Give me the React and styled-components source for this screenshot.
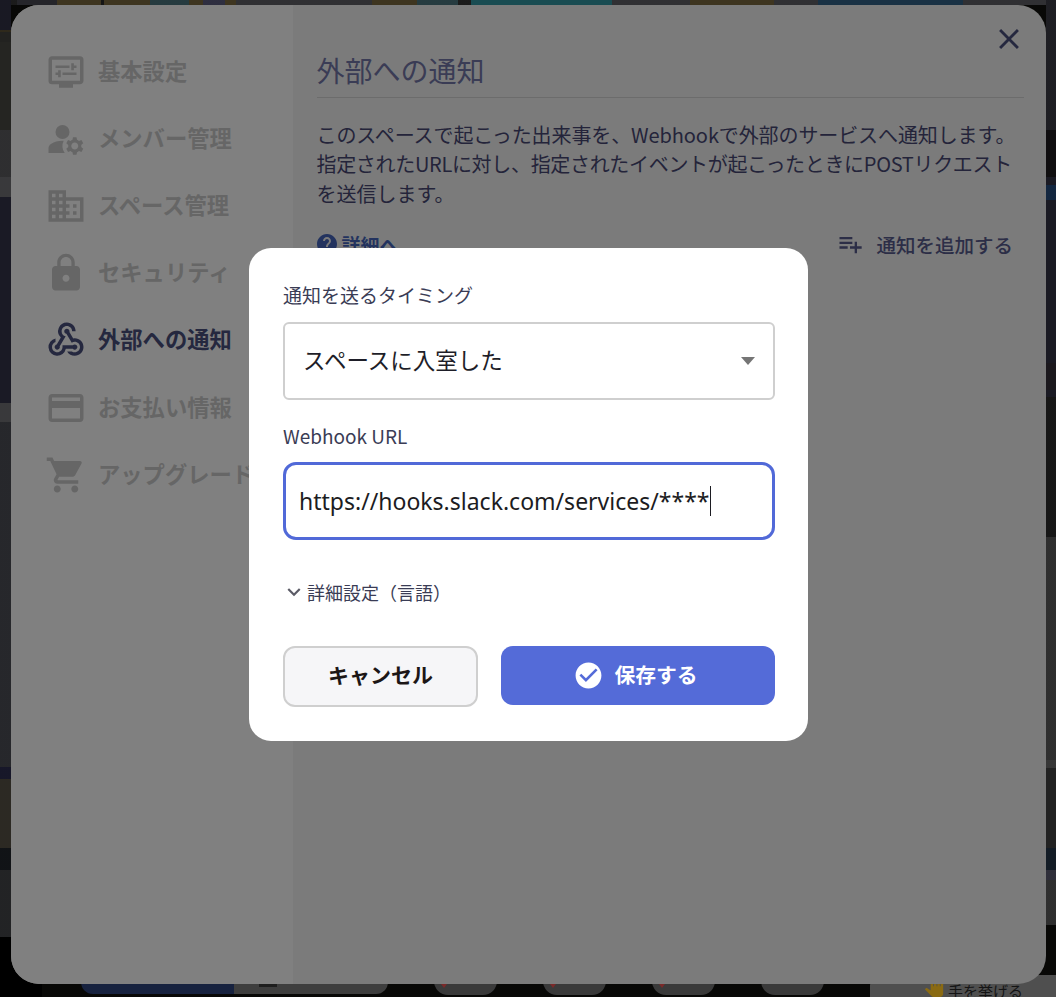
import React from "react";
import styled, { createGlobalStyle } from "styled-components";
import {
  MdDisplaySettings,
  MdManageAccounts,
  MdDomain,
  MdLock,
  MdWebhook,
  MdCreditCard,
  MdShoppingCart,
  MdClose,
  MdPlaylistAdd,
  MdHelp,
  MdCheckCircle,
  MdExpandMore,
  MdPanTool,
} from "react-icons/md";

const Global = createGlobalStyle`
  html, body { margin: 0; padding: 0; height: 100%; background: #0a0a08; }
  body { font-family: "Noto Sans CJK JP", "Noto Sans", sans-serif; overflow: hidden; }
  * { box-sizing: border-box; }
`;

const leftEdge = `linear-gradient(to bottom,
  #1f1f2c 0 30px, #3a3322 30px 32px, #2a2a28 32px 42px, #2e2e2a 42px 130px,
  #3a3a3c 130px 177px, #47474a 177px 197px, #20202e 197px 403px, #47474a 403px 422px,
  #303136 422px 767px, #1d1d33 767px 779px, #37332c 779px 848px, #15181c 848px 870px,
  #2b2c2e 870px 937px, #000 937px)`;

const rightEdge = `linear-gradient(to bottom,
  #26262c 0 130px, #141214 130px 177px, #20202c 177px 185px, #173050 185px 200px,
  #20202c 200px 363px, #221e24 363px 390px, #20202c 390px 397px, #1c1c1c 397px 537px,
  #3a3a3a 537px 760px, #444 760px 768px, #2a2a2a 768px 848px, #18232f 848px 870px,
  #3a3a48 870px 880px, #3a3a3a 880px 925px, #0a0a08 925px)`;

const topEdge = `linear-gradient(to right,
  #222 0 17px, #2e2e34 17px 57px, #4d4228 57px 101px, #1a1a1a 101px 104px, #4d4228 104px 150px,
  #2f4a50 150px 189px, #4d4228 189px 203px, #3a3a50 203px 225px, #4d4228 225px 236px,
  #3c3c40 236px 372px, #4d4228 372px 417px, #2f4a50 417px 458px, #222 458px 471px,
  #1f5f66 471px 612px, #3c3c40 612px 690px, #4d4228 690px 774px, #3c3c40 774px 818px,
  #1f3d55 818px 963px, #3c3c40 963px)`;

const Stage = styled.div`
  position: relative;
  width: 1056px;
  height: 997px;
  overflow: hidden;
  padding: 5px 10px 13px 11px;
  display: flex;
  background:
    linear-gradient(rgba(0, 0, 0, 0.2), rgba(0, 0, 0, 0.2)),
    ${leftEdge} left top / 11px 100% no-repeat,
    ${rightEdge} right top / 10px 100% no-repeat,
    ${topEdge} left top / 100% 5px no-repeat,
    linear-gradient(to right, #000 0 42px, #0a0a08 42px) left bottom / 100% 60px no-repeat,
    #0a0a08;
`;

const Dock = styled.footer`
  position: absolute;
  left: 0;
  right: 0;
  bottom: 0;
  height: 22px;
  padding-left: 81px;
  display: flex;
  align-items: flex-start;
`;

const MainTab = styled.div`
  width: 153px;
  height: 19px;
  background: ${(p) => p.$c};
  border-radius: ${(p) => p.$r};
`;

const GrayTab = styled(MainTab)`
  width: 154px;
  margin-right: 46px;
  padding: 9px 0 0 25px;
`;

const TabMark = styled.div`
  width: 18px;
  height: 3px;
  background: #1e1e1e;
`;

const RoundButton = styled.div`
  position: relative;
  width: 63px;
  height: 20px;
  margin-right: 46px;
  background: #3a3a3a;
  border-radius: 0 0 14px 14px;
  &::before {
    content: "";
    display: ${(p) => (p.$mark ? "block" : "none")};
    position: absolute;
    left: 7px;
    top: 9px;
    border-left: 3px solid transparent;
    border-right: 3px solid transparent;
    border-top: 4px solid #7a2a2a;
  }
`;

const RaiseHand = styled.div`
  margin-left: auto;
  width: 186px;
  height: 22px;
  padding: 0 0 0 54px;
  background: #4f4f4f;
  border-radius: 10px 0 0 0;
  display: flex;
  align-items: flex-end;
  gap: 4px;
  color: #141414;
  font-size: 15px;
  line-height: 12px;
  white-space: nowrap;
  overflow: hidden;
`;

const Settings = styled.div`
  position: relative;
  flex: 1;
  display: flex;
  border-radius: 28px;
  overflow: hidden;
  background: #7b7b7b;
`;

const Side = styled.nav`
  width: 282px;
  background: #808080;
  padding: 33px 0 0 33.5px;
  display: flex;
  flex-direction: column;
`;

const NavItem = styled.div`
  height: 67.2px;
  display: flex;
  align-items: center;
  gap: 11.5px;
  font-size: 22.3px;
  font-weight: 700;
  white-space: nowrap;
  color: ${(p) => (p.$active ? "#25283f" : "#666666")};
  svg {
    width: 42px;
    height: 42px;
    flex: none;
  }
`;

const NavLabel = styled.span`
  padding-bottom: 4px;
`;

const Main = styled.main`
  flex: 1;
  min-width: 0;
  padding: 41px 22px 0 23.5px;
`;

const Title = styled.h1`
  margin: 0;
  height: 52px;
  padding-top: 3px;
  font-size: 28px;
  line-height: 43px;
  font-weight: 400;
  color: #3a3c55;
  border-bottom: 1px solid #6c6c6c;
`;

const Desc = styled.p`
  margin: 22px 0 0;
  font-size: 20px;
  line-height: 29.3px;
  color: #24243a;
`;

const DescLine = styled.span`
  display: block;
  white-space: nowrap;
  letter-spacing: ${(p) => p.$track}px;
`;

const ActionRow = styled.div`
  margin-top: 22px;
  padding-right: 11px;
  display: flex;
  justify-content: space-between;
  align-items: center;
`;

const HelpLink = styled.span`
  margin-left: -2px;
  display: flex;
  align-items: center;
  gap: 3px;
  font-size: 19px;
  font-weight: 700;
  color: #23335f;
`;

const AddButton = styled.span`
  display: flex;
  align-items: center;
  gap: 12px;
  font-size: 19.5px;
  font-weight: 500;
  color: #2c2e47;
`;

const CloseButton = styled.button`
  position: absolute;
  top: 16px;
  right: 19px;
  width: 36px;
  height: 36px;
  padding: 0;
  border: 0;
  background: none;
  color: #25283f;
  display: flex;
  align-items: center;
  justify-content: center;
`;

const DialogLayer = styled.div`
  position: absolute;
  inset: 0;
  padding: 0 0 8px 1px;
  display: flex;
  align-items: center;
  justify-content: center;
`;

const Dialog = styled.section`
  width: 559px;
  height: 493px;
  border-radius: 22px;
  background: #fff;
  padding: 33px 33px 0 34px;
  display: flex;
  flex-direction: column;
`;

const Label = styled.label`
  font-size: 19px;
  line-height: 28px;
  color: #3a3c55;
`;

const Select = styled.div`
  margin-top: 13px;
  height: 78px;
  border: 2px solid #cfcfcf;
  border-radius: 6px;
  padding: 0 18px;
  display: flex;
  align-items: center;
  justify-content: space-between;
  font-size: 22.5px;
  color: #1e1e28;
`;

const SelectValue = styled.span`
  padding-bottom: 5px;
`;

const Caret = styled.span`
  width: 0;
  height: 0;
  border-left: 7px solid transparent;
  border-right: 7px solid transparent;
  border-top: 8px solid #757575;
`;

const UrlLabel = styled(Label)`
  margin-top: 22px;
`;

const Input = styled.div`
  margin-top: 12px;
  height: 78px;
  border: 3px solid #5169d8;
  border-radius: 13px;
  padding: 0 13px;
  display: flex;
  align-items: center;
  font-size: 23px;
  color: #1c1c22;
  font-family: "Noto Sans", "Noto Sans CJK JP", sans-serif;
  white-space: nowrap;
`;

const TextCursor = styled.span`
  width: 1.5px;
  height: 30px;
  background: #1c1c22;
`;

const Advanced = styled.div`
  margin-top: 38px;
  display: flex;
  align-items: center;
  font-size: 18px;
  line-height: 28px;
  color: #3a3c55;
  svg {
    margin-left: -2px;
    color: #5b5b66;
  }
`;

const Buttons = styled.div`
  margin-top: 40px;
  display: flex;
  align-items: flex-start;
  gap: 23px;
`;

const Cancel = styled.button`
  width: 195px;
  height: 61px;
  padding: 0 0 5px;
  border: 2px solid #cfcfcf;
  border-radius: 12px;
  background: #f6f6f8;
  font-family: inherit;
  font-size: 21px;
  font-weight: 700;
  color: #1c1616;
`;

const Save = styled.button`
  flex: 1;
  height: 59px;
  padding: 0 5px 0 0;
  border: 0;
  border-radius: 12px;
  background: #546bd8;
  font-family: inherit;
  font-size: 20.8px;
  font-weight: 700;
  color: #fff;
  display: flex;
  align-items: center;
  justify-content: center;
  gap: 10px;
`;

const SaveLabel = styled.span`
  padding-bottom: 3px;
`;

const items = [
  { label: "基本設定", Icon: MdDisplaySettings },
  { label: "メンバー管理", Icon: MdManageAccounts },
  { label: "スペース管理", Icon: MdDomain },
  { label: "セキュリティ", Icon: MdLock },
  { label: "外部への通知", Icon: MdWebhook, active: true },
  { label: "お支払い情報", Icon: MdCreditCard },
  { label: "アップグレード", Icon: MdShoppingCart },
];

export default function App() {
  return (
    <Stage>
      <Global />
      <Dock>
        <MainTab $c="#17223f" $r="0 0 0 12px" />
        <GrayTab $c="#3e3e3e" $r="0 0 12px 0">
          <TabMark />
        </GrayTab>
        <RoundButton $mark />
        <RoundButton $mark />
        <RoundButton $mark />
        <RoundButton />
        <RaiseHand>
          <MdPanTool size={20} color="#8a6a12" />
          手を挙げる
        </RaiseHand>
      </Dock>
      <Settings>
        <Side>
          {items.map(({ label, Icon, active }) => (
            <NavItem key={label} $active={active}>
              <Icon />
              <NavLabel>{label}</NavLabel>
            </NavItem>
          ))}
        </Side>
        <Main>
          <Title>外部への通知</Title>
          <Desc>
            <DescLine $track={-0.1}>
              このスペースで起こった出来事を、Webhookで外部のサービスへ通知します。
            </DescLine>
            <DescLine $track={-0.32}>
              指定されたURLに対し、指定されたイベントが起こったときにPOSTリクエスト
            </DescLine>
            <DescLine $track={0}>を送信します。</DescLine>
          </Desc>
          <ActionRow>
            <HelpLink>
              <MdHelp size={24} />
              詳細へ
            </HelpLink>
            <AddButton>
              <MdPlaylistAdd size={28} />
              通知を追加する
            </AddButton>
          </ActionRow>
        </Main>
        <CloseButton aria-label="閉じる">
          <MdClose size={34} />
        </CloseButton>
      </Settings>
      <DialogLayer>
        <Dialog>
          <Label>通知を送るタイミング</Label>
          <Select>
            <SelectValue>スペースに入室した</SelectValue>
            <Caret />
          </Select>
          <UrlLabel>Webhook URL</UrlLabel>
          <Input>
            https://hooks.slack.com/services/****
            <TextCursor />
          </Input>
          <Advanced>
            <MdExpandMore size={26} />
            詳細設定（言語）
          </Advanced>
          <Buttons>
            <Cancel>キャンセル</Cancel>
            <Save>
              <MdCheckCircle size={31} />
              <SaveLabel>保存する</SaveLabel>
            </Save>
          </Buttons>
        </Dialog>
      </DialogLayer>
    </Stage>
  );
}
